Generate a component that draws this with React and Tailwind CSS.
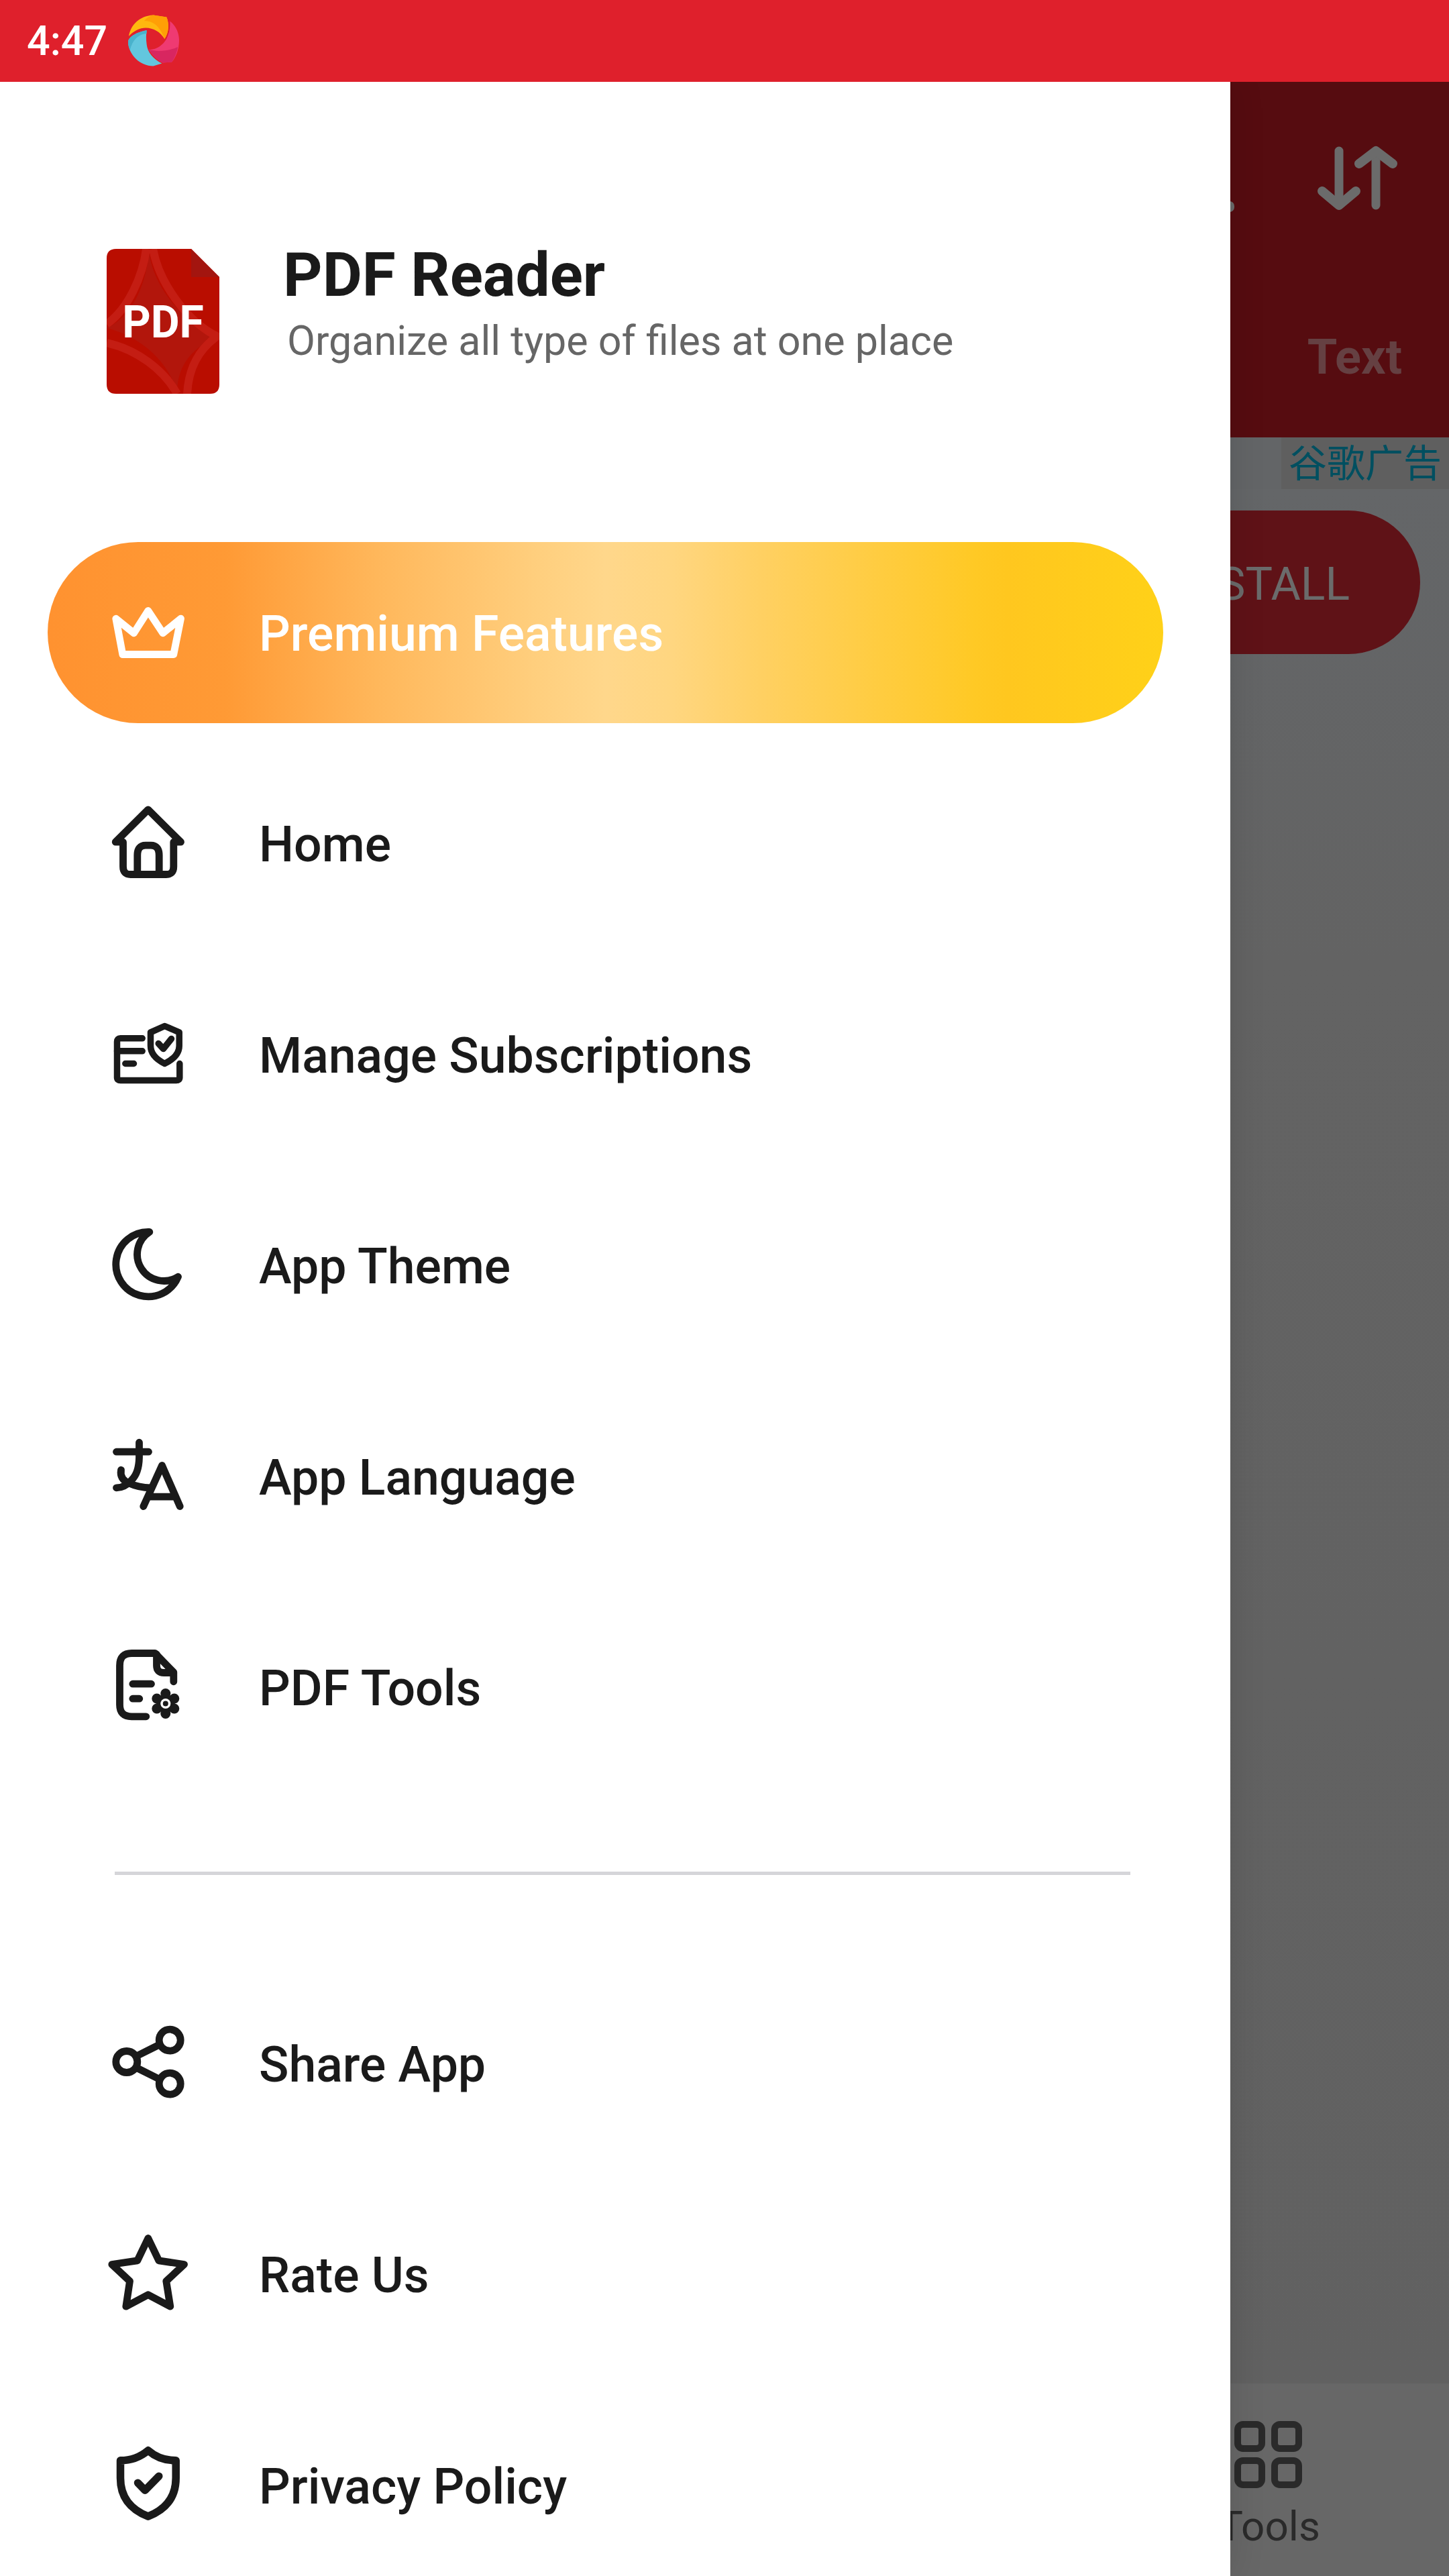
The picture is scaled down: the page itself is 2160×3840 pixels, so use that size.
const S = ({ children, color = "#1a1a1a", sw = 10.8 }) => (
  <svg viewBox="0 0 120 120" className="w-[120px] h-[120px] shrink-0 mb-[5px]" fill="none" stroke={color} strokeWidth={sw} strokeLinecap="round" strokeLinejoin="round">
    {children}
  </svg>
);

const Crown = () => (
  <S color="#ffffff">
    <path d="M11.8 41.2 38.5 62.8 59.8 29.5 81.8 62.8 108.5 41.2 97.8 94.5H21.8Z" />
  </S>
);
const Home = () => (
  <S>
    <path d="M11.2 60.2 59.8 11.8 108.5 60.2H97.8V96.8Q97.8 108.5 86.8 108.5H33.5Q22.5 108.5 22.5 96.8V60.2Z" />
    <path d="M43.8 108.5V80Q43.8 65.2 56 65.2H64Q76.2 65.2 76.2 80V108.5" />
  </S>
);
const Manage = () => (
  <S sw={9.5}>
    <path d="M51.2 38.8H18.5Q13.5 38.8 13.5 43.8V97.2Q13.5 101.5 18.5 101.5H101.8Q106.8 101.5 106.8 97.2V76.5" />
    <path d="M13.5 57.8H51.2M25.8 76.5H38.5" />
    <path d="M84.5 20.5 106.2 29.8V50Q106.2 66 84.5 76.5 63.5 66 63.5 50V29.8Z" />
    <path d="M75.2 46.5 82.5 54.5 94.5 39.5" />
  </S>
);
const Moon = () => (
  <S>
    <path d="M61.8 12.5A48.2 48.2 0 1 0 104.5 79.2 39 39 0 0 1 61.8 12.5Z" />
  </S>
);
const Lang = () => (
  <S>
    <path d="M12.5 26.2H60.5M46.5 12.2V34.8Q46 58 35.2 68.2 25 79.8 12.5 79.8" />
    <path d="M19.5 53.2Q17 67 31.8 73.2 46 79.8 63.5 79.8" />
    <path d="M52.8 107.5 80.5 46.5 107.2 107.5M62.8 93.2H100.2" />
  </S>
);
const Tools = () => (
  <S>
    <path d="M56.8 106.8H35.2Q17.5 106.8 17.5 89.2V30.8Q17.5 12.5 35.2 12.5H70.2L97.8 40.8V54.8" />
    <path d="M72.5 14V30.8Q72.5 41.5 83.5 41.5H96" />
    <path d="M36.8 58.2H64.5M36.8 80.2H46.8" />
    <g fill="#1a1a1a" stroke="none">
      <circle cx="85.8" cy="87.5" r="14" />
      <circle cx="85.8" cy="72.5" r="7.5" />
      <circle cx="85.8" cy="102.5" r="7.5" />
      <circle cx="72.8" cy="80" r="7.5" />
      <circle cx="98.8" cy="80" r="7.5" />
      <circle cx="72.8" cy="95" r="7.5" />
      <circle cx="98.8" cy="95" r="7.5" />
      <circle cx="85.8" cy="87.5" r="7.5" fill="#ffffff" />
      <circle cx="85.8" cy="87.5" r="4" />
    </g>
  </S>
);
const Share = () => (
  <S>
    <circle cx="92.2" cy="28.2" r="16" />
    <circle cx="27.8" cy="60.5" r="16" />
    <circle cx="92.2" cy="93.2" r="16" />
    <path d="M43.5 51.5 76.8 34.8M43.5 69.8 76.8 86.5" strokeLinecap="butt" />
  </S>
);
const Star = () => (
  <S>
    <path d="M59.8 8.5 75.8 41.8 113.5 47.5 86.8 72.5 92.8 110.2 59.8 92.8 26.8 110.2 32.5 72.5 5.8 47.5 43.8 41.8Z" />
  </S>
);
const Shield = () => (
  <S sw={11.5}>
    <path d="M59.8 10.8Q42 25.8 18.5 25.8V52Q18.5 93 59.8 109.2 101.2 93 101.2 52V25.8Q77 25.8 59.8 10.8Z" />
    <path d="M44.5 59.2 55.2 70.2 75.8 49.2" />
  </S>
);

const StatusLogo = () => (
  <svg viewBox="0 0 78 78" className="w-[77px] h-[78px] ml-[31px]">
    <path d="M1 32C4 14 18 1 38 0L58 3C62 12 62 26 55 36 48 24 34 17 20 20 13 22 6 26 1 32Z" fill="#ffb80f" />
    <path d="M24 9C36 8 48 16 55 36 62 26 62 12 58 3L38 0C33 1 28 4 24 9Z" fill="#ff9f06" />
    <path d="M63 9C73 17 77 28 77 38 77 52 72 64 66 71L52 72C44 68 36 60 31 52 42 53 52 46 58 36 62 28 64 18 63 9Z" fill="#ef3a72" />
    <path d="M31 52C44 56 62 54 75 48 74 56 70 65 66 71L52 72C44 68 36 60 31 52Z" fill="#d82660" />
    <path d="M28 23C12 26 0 33 0 41 1 60 18 77 38 77L51 73C38 66 29 56 28 44 27 36 27 30 28 23Z" fill="#63c6de" />
    <path d="M28 23C12 26 0 33 0 41 0 45 1 49 3 53 6 38 16 28 28 28Z" fill="#49b2cc" />
  </svg>
);

const PdfLogo = () => (
  <svg viewBox="0 0 168 216" className="w-[168px] h-[216px] shrink-0 mt-[6px]">
    <path d="M14 0H126L168 42V202Q168 216 154 216H14Q0 216 0 202V14Q0 0 14 0Z" fill="#b90d00" />
    <path d="M63 0C66 50 110 110 168 130 120 150 105 180 105 216 95 170 50 130 0 118 40 100 60 50 63 0Z" fill="#b2160c" />
    <path d="M59 0C54 40 32 90 0 112M69 0C78 50 120 110 168 132M0 140C45 150 85 180 105 216M168 128C135 150 122 180 120 216" fill="none" stroke="#c41d13" strokeWidth="12" />
    <path d="M126 0V42H168Z" fill="#a3150f" />
    <text x="84" y="132" textAnchor="middle" fill="#ffffff" fontFamily="Roboto, sans-serif" fontWeight="700" fontSize="66">PDF</text>
  </svg>
);

const Row = ({ icon, label, premium }) => (
  <div className={`ml-[71px] w-[1663px] h-[270px] pl-[90px] flex items-center gap-[105px] rounded-full ${premium ? "bg-[linear-gradient(90deg,#ff9230_0%,#ff9a35_16%,#ffb85c_30%,#ffcf7e_44%,#ffd78b_50%,#ffd680_56%,#ffd062_64%,#ffc925_83%,#ffc71f_86%,#ffd118_100%)] text-white" : "text-[#1a1a1a]"}`}>
    {icon}
    <span className="mt-[4px] text-[73.4px] leading-[80px] font-medium">{label}</span>
  </div>
);

export default function App() {
  return (
    <div className="relative w-[2160px] h-[3840px] overflow-hidden flex flex-col bg-[#636363] font-['Roboto',sans-serif]">
      <div className="h-[122px] shrink-0 bg-[#df202c] flex items-center pl-[40px] relative z-20">
        <span className="text-white text-[61px] leading-[70px] font-medium">4:47</span>
        <StatusLogo />
      </div>

      <div className="relative h-[530px] shrink-0 bg-[#560c10] flex flex-col items-end">
        <div className="absolute left-[1826px] top-[178px] w-[14px] h-[16px] rounded-full bg-[#6b6b6b]" />
        <svg viewBox="0 0 130 112" className="w-[130px] h-[112px] mt-[87px] mr-[71px]" fill="none" stroke="#6b6b6b" strokeWidth="13" strokeLinecap="round" strokeLinejoin="round">
          <path d="M37 16V97" />
          <path d="M12 76 37 97 62 76" strokeWidth="14" />
          <path d="M92 97V16" />
          <path d="M67 35 92 16 117 35" strokeWidth="14" />
        </svg>
        <span className="mt-[170px] mr-[70px] text-[72px] leading-[84px] font-bold text-[#654042]">Text</span>
      </div>

      <div className="h-[77px] shrink-0 flex justify-end bg-[#636567]">
        <div className="w-[250px] h-[77px] bg-[#5f5f5f] flex items-center justify-center text-[57px] leading-[70px] text-[#004f60] font-['Liberation_Sans','Noto_Sans_CJK_SC',sans-serif]">
          谷歌广告
        </div>
      </div>

      <div className="flex-1 flex flex-col bg-[linear-gradient(180deg,#646668_0%,#636363_25%,#616161_100%)]">
        <div className="mt-[32px] self-end mr-[43px] w-[900px] h-[214px] rounded-full bg-[#5f1217] flex items-center justify-end pr-[105px] text-[68px] leading-[80px] text-[#6b6b6b]">
          <span className="mt-[5px]">INSTALL</span>
        </div>
      </div>

      <div className="h-[287px] shrink-0 bg-[#676767] flex justify-end">
        <div className="mr-[158px] w-[220px] flex flex-col items-center pt-[56px]">
          <svg viewBox="0 0 101 100" className="w-[101px] h-[100px] -ml-[4px]" fill="none" stroke="#2a2a2a" strokeWidth="10">
            <rect x="5" y="5" width="36" height="36" rx="8" />
            <rect x="60" y="5" width="36" height="36" rx="8" />
            <rect x="5" y="59" width="36" height="36" rx="8" />
            <rect x="60" y="59" width="36" height="36" rx="8" />
          </svg>
          <span className="mt-[21px] text-[62px] leading-[72px] text-[#2a2a2a]">Tools</span>
        </div>
      </div>

      <aside className="absolute left-0 top-[122px] bottom-0 w-[1834px] bg-white overflow-hidden z-10 shadow-[0_0_50px_rgba(0,0,0,0.12)]">
        <div className="pt-[243px] pl-[159px] flex items-start">
          <PdfLogo />
          <div className="ml-[95px] flex flex-col">
            <span className="text-[91px] leading-[90px] font-bold text-[#1a1a1a]">PDF Reader</span>
            <span className="ml-[6px] mt-[18px] text-[61px] leading-[70px] text-[#666666]">Organize all type of files at one place</span>
          </div>
        </div>

        <div className="mt-[221px] flex flex-col gap-[44.4px]">
          <Row premium icon={<Crown />} label="Premium Features" />
          <Row icon={<Home />} label="Home" />
          <Row icon={<Manage />} label="Manage Subscriptions" />
          <Row icon={<Moon />} label="App Theme" />
          <Row icon={<Lang />} label="App Language" />
          <Row icon={<Tools />} label="PDF Tools" />
        </div>

        <div className="mt-[140px] mb-[146px] ml-[171px] w-[1514px] h-[5px] bg-[#d5d5d9]" />

        <div className="flex flex-col gap-[44.4px]">
          <Row icon={<Share />} label="Share App" />
          <Row icon={<Star />} label="Rate Us" />
          <Row icon={<Shield />} label="Privacy Policy" />
        </div>
      </aside>
    </div>
  );
}
